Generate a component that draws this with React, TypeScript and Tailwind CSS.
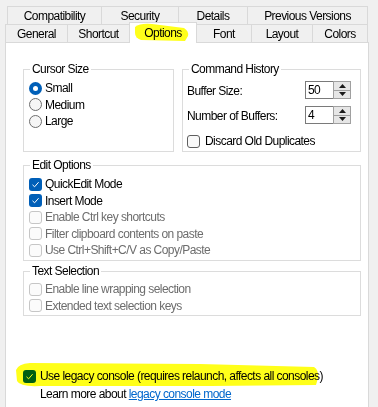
import React from 'react';

const font = "font-['Liberation_Sans',Arial,sans-serif]";

function Check({ checked, disabled }: { checked?: boolean; disabled?: boolean }) {
  if (checked) {
    return (
      <span className="flex h-[13px] w-[13px] shrink-0 items-center justify-center rounded-[3px] bg-[#005fb8]">
        <svg width="9" height="9" viewBox="0 0 9 9">
          <path d="M1.5 4.8 L3.6 6.8 L7.6 2.2" fill="none" stroke="#ffffff" strokeWidth="1" />
        </svg>
      </span>
    );
  }
  return (
    <span
      className={
        disabled
          ? 'h-[13px] w-[13px] shrink-0 rounded-[3px] border border-[#c6c6c6] bg-[#fbfbfb]'
          : 'h-[13px] w-[13px] shrink-0 rounded-[3px] border border-[#5f5f5f] bg-[#f9f9f9]'
      }
    />
  );
}

function Radio({ checked }: { checked?: boolean }) {
  if (checked) {
    return (
      <span className="flex h-[13px] w-[13px] shrink-0 items-center justify-center rounded-full bg-[#005fb8]">
        <span className="h-[5px] w-[5px] rounded-full bg-white" />
      </span>
    );
  }
  return <span className="h-[13px] w-[13px] shrink-0 rounded-full border border-[#6e6e6e] bg-[#f6f6f6]" />;
}

function Spin({ value }: { value: string }) {
  return (
    <div className="flex h-[18px] w-[46px]">
      <div className="flex w-[28px] items-center border-t border-l border-b border-[#7a7a7a] bg-white pl-[2px]">
        {value}
      </div>
      <div className="flex w-[18px] flex-col border border-[#a0a0a0] bg-[#f0f0f0]">
        <div className="flex flex-1 items-center justify-center border-b border-[#a0a0a0] bg-[#e6e6e6]">
          <svg width="7" height="4" viewBox="0 0 7 4">
            <path d="M0 4 L3.5 0 L7 4 Z" fill="#1a1a1a" />
          </svg>
        </div>
        <div className="flex flex-1 items-center justify-center bg-[#e6e6e6]">
          <svg width="7" height="4" viewBox="0 0 7 4">
            <path d="M0 0 L3.5 4 L7 0 Z" fill="#1a1a1a" />
          </svg>
        </div>
      </div>
    </div>
  );
}

function Title({ children }: { children: React.ReactNode }) {
  return <div className="-mt-[9px] ml-[6px] w-fit bg-white px-[2px] leading-[16px]">{children}</div>;
}

function Row({ children, dim }: { children: React.ReactNode; dim?: boolean }) {
  return (
    <div className={dim ? 'flex h-[16.5px] items-center gap-[3px] text-[#6d6d6d]' : 'flex h-[16.5px] items-center gap-[3px]'}>
      {children}
    </div>
  );
}

export default function App() {
  return (
    <div className={`relative h-[407px] w-[378px] overflow-hidden bg-[#f0f0f0] text-[12px] leading-[16px] tracking-[-0.55px] text-black ${font}`}>
      {/* tab rows */}
      <div className="pt-[6px]">
        <div className="ml-[7px] flex h-[18px]">
          <div className="flex w-[94px] items-center justify-center border-t border-l border-[#d9d9d9]">Compatibility</div>
          <div className="flex w-[77px] items-center justify-center border-t border-l border-[#d9d9d9]">Security</div>
          <div className="flex w-[69px] items-center justify-center border-t border-l border-[#d9d9d9]">Details</div>
          <div className="flex w-[121px] items-center justify-center border-t border-l border-r border-[#d9d9d9]">Previous Versions</div>
        </div>
        <div className="ml-[5px] flex h-[18px] items-end">
          <div className="flex h-[18px] w-[62px] items-center justify-center border-t border-l border-[#d9d9d9]">General</div>
          <div className="flex h-[18px] w-[62px] items-center justify-center border-t border-l border-[#d9d9d9]">Shortcut</div>
          <div className="relative z-10 -mb-[1px] flex h-[21px] w-[68px] items-center justify-center border-t border-l border-r border-[#d9d9d9] bg-white pb-[1px]">
            Options
          </div>
          <div className="flex h-[18px] w-[54px] items-center justify-center border-t border-[#d9d9d9]">Font</div>
          <div className="flex h-[18px] w-[61px] items-center justify-center border-t border-l border-[#d9d9d9]">Layout</div>
          <div className="flex h-[18px] w-[56px] items-center justify-center border-t border-l border-r border-[#d9d9d9]">Colors</div>
        </div>
      </div>

      {/* page */}
      <div className="ml-[5px] h-[370px] w-[364px] border border-[#d9d9d9] bg-white pl-[17px] pt-[26px]">
        <div className="flex gap-[8px]">
          <div className="h-[83px] w-[151px] border border-[#dcdcdc]">
            <Title>Cursor Size</Title>
            <div className="mt-[3px] pl-[5px]">
              <Row><Radio checked />Small</Row>
              <Row><Radio />Medium</Row>
              <Row><Radio />Large</Row>
            </div>
          </div>
          <div className="h-[83px] w-[179px] border border-[#dcdcdc]">
            <Title>Command History</Title>
            <div className="pl-[4px] pr-[9px]">
              <div className="mt-[4px] flex h-[18px] items-center justify-between">
                <span className="pt-[2px]">Buffer Size:</span>
                <Spin value="50" />
              </div>
              <div className="mt-[7px] flex h-[18px] items-center justify-between">
                <span className="pt-[2px]">Number of Buffers:</span>
                <Spin value="4" />
              </div>
              <div className="mt-[9px] flex h-[16px] items-center gap-[5px]">
                <Check />
                Discard Old Duplicates
              </div>
            </div>
          </div>
        </div>

        <div className="mt-[13px] h-[96px] w-[338px] border border-[#dcdcdc]">
          <Title>Edit Options</Title>
          <div className="mt-[3px] pl-[5px]">
            <Row><Check checked />QuickEdit Mode</Row>
            <Row><Check checked />Insert Mode</Row>
            <Row dim><Check disabled />Enable Ctrl key shortcuts</Row>
            <Row dim><Check disabled />Filter clipboard contents on paste</Row>
            <Row dim><Check disabled />Use Ctrl+Shift+C/V as Copy/Paste</Row>
          </div>
        </div>

        <div className="mt-[10px] h-[45px] w-[338px] border border-[#dcdcdc]">
          <Title>Text Selection</Title>
          <div className="mt-[2px] pl-[5px]">
            <Row dim><Check disabled />Enable line wrapping selection</Row>
            <Row dim><Check disabled />Extended text selection keys</Row>
          </div>
        </div>

        <div className="mt-[52px] flex h-[16px] items-center gap-[4px] whitespace-nowrap">
          <Check checked />
          Use legacy console (requires relaunch, affects all consoles)
        </div>
        <div className="mt-[2px] h-[16px] whitespace-nowrap pl-[17px]">
          Learn more about <span className="text-[#0066cc] underline">legacy console mode</span>
        </div>
      </div>

      {/* highlighter marks */}
      <svg className="pointer-events-none absolute inset-0 z-20 mix-blend-multiply" width="378" height="407" viewBox="0 0 378 407">
        <path d="M135 27 Q140 23 152 24 L184 28 Q189 31 188 36 L185 41 L141 40 Q135 38 135 33 Z" fill="#ffff1a" />
        <path d="M16 370 Q18 364 30 363 L200 364 L314 367 Q319 370 318 378 L316 385 L210 386 L40 386 Q20 387 17 381 Z" fill="#ffff1a" />
      </svg>
    </div>
  );
}
